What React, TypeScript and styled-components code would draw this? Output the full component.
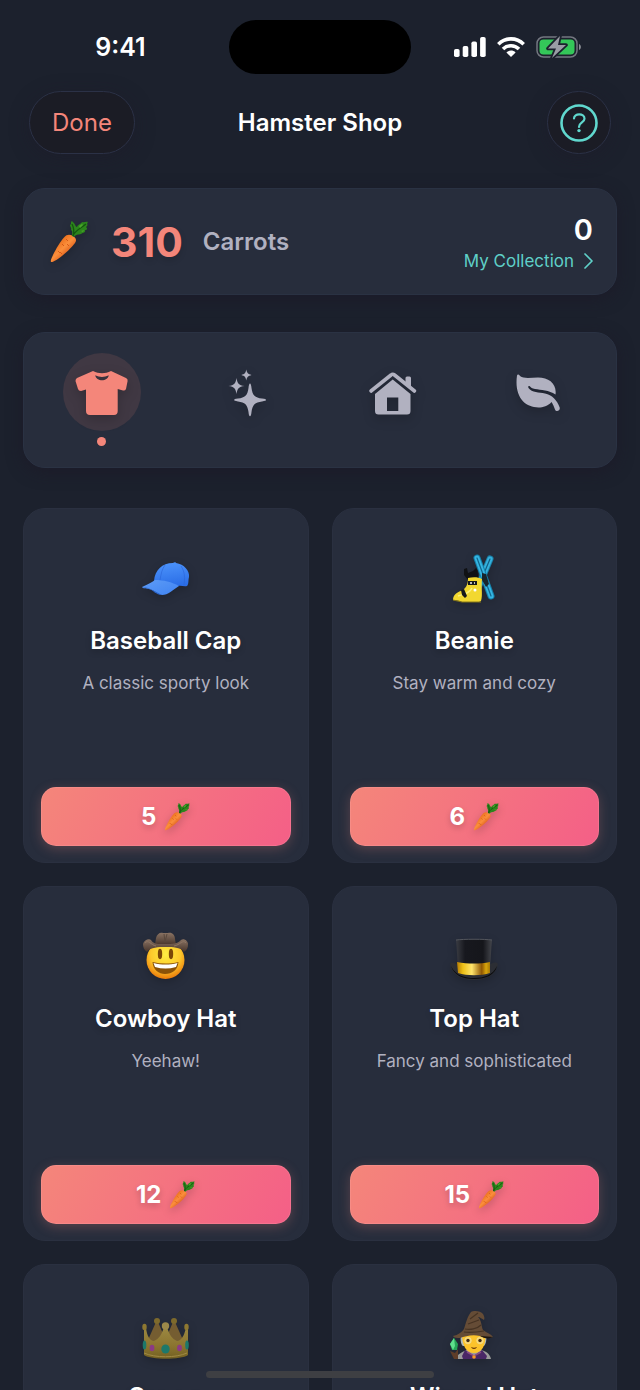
import React from 'react';
import styled, { createGlobalStyle } from 'styled-components';

const CarrotIcon: React.FC<{ width: number; height: number }> = ({
  width,
  height,
}) => (
  <Drawing width={width} height={height} viewBox="0 0 38 42" aria-hidden="true">
    <defs>
      <linearGradient id="carrotBody" x1="0.3" y1="0.3" x2="0.75" y2="0.8">
        <stop offset="0" stopColor="#ee7420" />
        <stop offset="0.4" stopColor="#fb8f3c" />
        <stop offset="1" stopColor="#d24a0e" />
      </linearGradient>
    </defs>
    <path
      d="M1 41C-0.500 39 9 22 14 16.500C17 13 20 13.500 23 15C26 17 27 19 25 22C20 29 5 42 1 41Z"
      fill="url(#carrotBody)"
    />
    <path
      d="M16 18l2 2M12 23l2 2M19 25l-2-2M8 30l2 2M12 33l-2-2"
      stroke="#c94708"
      strokeWidth="0.700"
    />
    <path
      d="M22 15C22 12 23 10 21 9C22 7 20 6 20 4C22 3 20 1 22 0C23 2 24 1 25 4C26 5 26 6 27 6C28 3 31 3 32 1C34 2 36 0 38 1C36 3 39 4 36 6C38 8 37 9 35 9C36 12 33 11 31 13C28 14 26 13 24 16Z"
      fill="#2c851c"
    />
    <path
      d="M23 15C24 10 31 7 36 3M23 15C25 9 23 5 22 3"
      stroke="#14570f"
      strokeWidth="1.300"
      fill="none"
    />
    <path d="M29 5l3-2 1 1-3 3zM31 10l3-1-1 2z" fill="#4ba62a" />
  </Drawing>
);

const CapIcon = () => (
  <Drawing width="48" height="48" viewBox="0 0 48 48" aria-hidden="true">
    <defs>
      <linearGradient id="capDome" x1="0.4" y1="0" x2="0.6" y2="1">
        <stop offset="0" stopColor="#4c93fb" />
        <stop offset="1" stopColor="#2a6de6" />
      </linearGradient>
      <linearGradient id="capBrim" x1="0" y1="0" x2="1" y2="1">
        <stop offset="0" stopColor="#5e9cf6" />
        <stop offset="1" stopColor="#3f83f2" />
      </linearGradient>
    </defs>
    <path
      d="M12 27C13 16 20 9 31 9C32 8 34 8 34 9C42 10 48 17 47 23C46 27 47 30 45 32C42 33 39 31 36 32Z"
      fill="url(#capDome)"
    />
    <path
      d="M23 11C20 15 19 20 18 26M39 12C43 18 43 24 42 31"
      stroke="#2a63d6"
      strokeWidth="0.600"
      fill="none"
    />
    <path
      d="M0 33C5 31 10 28 13 26C21 26 30 28 37 32C31 36 26 41 20 41C15 40 12 36 7 35C4 34 1 35 0 33Z"
      fill="url(#capBrim)"
    />
    <path d="M0 33C7 33 14 38 20 41C14 41 11 36 7 35Z" fill="#2d68cf" />
  </Drawing>
);

const SkiBootIcon = () => (
  <Drawing width="48" height="48" viewBox="0 0 48 48" aria-hidden="true">
    <g strokeLinecap="round">
      <path d="M40 5L27 36" stroke="#1a80a8" strokeWidth="7" />
      <path d="M40 5L27 36" stroke="#35b0dc" strokeWidth="5" />
      <path d="M40 5L27 36" stroke="#135f83" strokeWidth="1.200" />
      <path d="M27 4L41 42" stroke="#1480aa" strokeWidth="7" />
      <path d="M27 4L41 42" stroke="#36b5e2" strokeWidth="5" />
      <path d="M27 4L41 42" stroke="#12678c" strokeWidth="1.200" />
    </g>
    <path d="M32 19l4 1 3 10-3 3-4-7z" fill="#18252c" />
    <path
      d="M14 15L17 14L18 19L23 17L26 14C29 17 27 22 29 25L18 26L14 21Z"
      fill="#101114"
    />
    <path
      d="M18 24C23 23 28 23 32 25C31 34 33 41 31 47L29 48H12L10 47L3 46C3 40 8 38 13 36C17 33 18 29 18 24Z"
      fill="#f2d830"
    />
    <path
      d="M22 34C20 39 14 40 8 42"
      stroke="#fdf07a"
      strokeWidth="1.500"
      fill="none"
    />
    <path d="M18 27H27V31H18ZM11 36L14 35L17 42L15 44L12 41Z" fill="#17191b" />
    <circle cx="25" cy="36" r="1.500" fill="#fff" />
    <path d="M3 46L12 48H31" stroke="#867717" fill="none" />
    <path d="M20 28h2v2h-2zM24 28h1v2h-1z" fill="#b9b9b9" />
  </Drawing>
);

const CowboyIcon = () => (
  <Drawing width="48" height="48" viewBox="0 0 48 48" aria-hidden="true">
    <defs>
      <radialGradient id="cowboyFace" cx="0.5" cy="0.35" r="0.65">
        <stop offset="0" stopColor="#ffed43" />
        <stop offset="0.600" stopColor="#fdc92b" />
        <stop offset="1" stopColor="#ea7a0b" />
      </radialGradient>
      <linearGradient id="cowboyHat" x1="0" y1="0" x2="0" y2="1">
        <stop offset="0" stopColor="#8a7363" />
        <stop offset="1" stopColor="#46342b" />
      </linearGradient>
    </defs>
    <circle cx="23.500" cy="28" r="19" fill="url(#cowboyFace)" />
    <path
      d="M13 13L14 6C15 2 18 0 21 1H26C30 0 33 3 33 7L34 13Z"
      fill="url(#cowboyHat)"
    />
    <path d="M22 2L23 10L25 2" stroke="#59483c" fill="none" />
    <path
      d="M5 20C2 18 1 15 1 12C2 8 7 6 9 8C12 13 18 12 24 12C30 12 36 12 39 8C42 6 46 9 46 12C46 16 45 18 42 20C38 15 31 15 24 15C16 15 9 15 5 20Z"
      fill="url(#cowboyHat)"
    />
    <path
      d="M3 11C6 7 9 13 14 14M44 11C41 7 38 13 32 14"
      stroke="#8d7564"
      fill="none"
    />
    <ellipse cx="18" cy="22" rx="2.200" ry="5.200" fill="#7b4707" />
    <ellipse cx="29" cy="22" rx="2.200" ry="5.200" fill="#7b4707" />
    <path
      d="M10.500 30C19 32 28 32 36.500 30C36 38 30 42 23 42C17 42 11 38 10.500 30Z"
      fill="#8a5208"
    />
    <path d="M11.500 31C20 33 27 33 35.500 31L34 35C27 37 20 37 13 35Z" fill="#fff" />
  </Drawing>
);

const TopHatIcon = () => (
  <Drawing width="48" height="48" viewBox="0 0 48 48" aria-hidden="true">
    <defs>
      <linearGradient id="hatSide">
        <stop offset="0" stopColor="#3a3c43" />
        <stop offset="0.25" stopColor="#17181e" />
        <stop offset="0.75" stopColor="#15161b" />
        <stop offset="1" stopColor="#44464c" />
      </linearGradient>
      <linearGradient id="hatBand">
        <stop offset="0" stopColor="#b47b05" />
        <stop offset="0.18" stopColor="#edc016" />
        <stop offset="0.45" stopColor="#ffe56c" />
        <stop offset="0.75" stopColor="#8f5602" />
        <stop offset="0.88" stopColor="#d8a50c" />
        <stop offset="1" stopColor="#a77906" />
      </linearGradient>
    </defs>
    <path
      d="M0 32C2 29 6 32 9 33H39C42 31 46 29 48 32C46 43 37 48 24 48C11 48 2 43 0 32Z"
      fill="#2c2e34"
    />
    <path
      d="M1 34C6 44 15 46 24 46C34 46 43 43 47 34C45 43 36 47 24 47C12 47 4 43 1 34Z"
      fill="#0a0b0e"
    />
    <path
      d="M6 8C13 7 35 7 42 8C41 17 41 25 40 35H8C7 25 7 17 6 8Z"
      fill="url(#hatSide)"
    />
    <path d="M6 8C13 7 35 7 42 8" stroke="#53565d" fill="none" />
    <path
      d="M7 30C18 32 30 32 40 30V41C31 44 17 44 8 41Z"
      fill="url(#hatBand)"
    />
  </Drawing>
);

const CrownIcon = () => (
  <Drawing width="48" height="48" viewBox="0 0 48 48" aria-hidden="true">
    <defs>
      <linearGradient id="crownGold" x1="0" y1="0" x2="0" y2="1">
        <stop offset="0" stopColor="#9c8942" />
        <stop offset="0.600" stopColor="#8b742f" />
        <stop offset="1" stopColor="#726022" />
      </linearGradient>
    </defs>
    <path
      d="M14 12H16L22 26H25L31 12H33L41 30L35 35H12L6 30Z"
      fill="#755d31"
    />
    <circle cx="15" cy="11" r="3" fill="#7e6a2c" />
    <circle cx="32" cy="11" r="3" fill="#7e6a2c" />
    <path
      d="M2 18L4 18C5 26 8 31 12 31C17 29 20 24 22 17H25C27 24 30 29 35 31C39 31 42 26 44 18H46L46 45C39 50 9 50 2 45Z"
      fill="url(#crownGold)"
    />
    <circle cx="23.500" cy="16" r="3.700" fill="#9c894a" />
    <ellipse cx="2.500" cy="17" rx="2.200" ry="3.200" fill="#8e7831" />
    <ellipse cx="44.500" cy="17" rx="2.200" ry="3.200" fill="#8e7831" />
    <path d="M2 43C13 48 34 48 45 43" stroke="#a08a44" fill="none" />
    <ellipse cx="23.500" cy="39" rx="4.200" ry="4.600" fill="#1d786a" />
    <ellipse cx="2.500" cy="35" rx="1.800" ry="4.500" fill="#1d786a" />
    <ellipse cx="45" cy="35" rx="1.800" ry="4.500" fill="#1d786a" />
    <ellipse cx="10" cy="38" rx="2.400" ry="3.200" fill="#8b3a84" />
    <ellipse cx="37.500" cy="38" rx="2.400" ry="3.200" fill="#8b3a84" />
  </Drawing>
);

const WizardIcon = () => (
  <Drawing width="48" height="48" viewBox="0 0 48 48" aria-hidden="true">
    <path
      d="M6 49C7 44 12 42 17 40H31C36 41 40 44 41 49Z"
      fill="#9b9a9a"
    />
    <path d="M15 40L24 46L32 40L37 46L36 49H13L12 46Z" fill="#4a2766" />
    <path d="M17 42L24 46L31 42" stroke="#8a4a80" strokeWidth="1.500" fill="none" />
    <path d="M11 24C10 30 11 35 13 36H34C36 34 37 29 36 24Z" fill="#aeb8ba" />
    <path
      d="M12 24H35.500C36 35 32 43 24 43C16 43 12 35 12 24Z"
      fill="#fcc32b"
    />
    <path
      d="M3 26C8 25 12 22 14 19C16 13 17 7 21 2C24 0 31 1 33 4C34 6 35 8 34 10C32 9 30 7 28 7C32 11 31 16 33 20C37 23 41 24 43 27C39 29 34 28 30 26C23 24 15 26 10 28C7 28 4 28 3 26Z"
      fill="#654c36"
    />
    <path
      d="M20 9L28 3M18 14L29 10M15 19C20 20 27 19 31 15M14 22C21 23 28 22 34 21"
      stroke="#463323"
      strokeWidth="1.200"
      fill="none"
    />
    <path d="M30 26C35 26 40 27 43 27C39 29 35 29 30 26Z" fill="#1c1612" />
    <circle cx="18" cy="30.500" r="3.300" stroke="#e9dca0" strokeWidth="0.700" fill="#ffd96a" />
    <circle cx="30" cy="30.500" r="3.300" stroke="#e9dca0" strokeWidth="0.700" fill="#ffd96a" />
    <circle cx="18" cy="30.500" r="1.700" fill="#3d2b1b" />
    <circle cx="30" cy="30.500" r="1.700" fill="#3d2b1b" />
    <path d="M21 37C23 38 25 38 27 37C26 39.500 22 39.500 21 37Z" fill="#613007" />
    <circle cx="24" cy="47" r="1.800" fill="#f69824" />
    <path d="M4 28L8 34L7 40H2L0 34Z" fill="#25a556" />
    <path d="M4 28L5 36L3 40L0 34Z" fill="#5fe08c" />
    <path d="M0 41L5 43L8 39L8 49H4Z" fill="#5f3d29" />
  </Drawing>
);

const ShirtIcon = () => (
  <TabDrawing viewBox="0 0 78 78" aria-hidden="true">
    <path
      fillRule="evenodd"
      d="M30 18C36 21 42 21 48 18L63 25Q65 26 64.600 28L63 36Q62 38 60 37.500L54.700 36V58Q54.700 62 51 62H27Q23 62 23 58V36.500L18 38Q15.500 38 15 36L12.500 28Q12.500 26 14 25ZM32.300 22.300C33 29 45 29 45.700 22.300C41 24.500 37 24.500 32.300 22.300Z"
    />
  </TabDrawing>
);

const SparklesIcon = () => (
  <TabDrawing viewBox="0 0 78 78" aria-hidden="true">
    <path d="M42 30.500C42.700 30.500 43.200 32 43.500 35C44.500 42.500 47 44.700 54 45.600C57 46 58 46.200 58 47C58 47.800 57 48 54 48.400C47 49.300 44.500 51.500 43.500 59C43.200 62 42.700 63.300 42 63.300C41.300 63.300 40.800 62 40.500 59C39.500 51.500 37 49.300 30 48.400C27 48 26.200 47.800 26.200 47C26.200 46.200 27 46 30 45.600C37 44.700 39.500 42.500 40.500 35C40.800 32 41.300 30.500 42 30.500Z" />
    <path d="M28.500 25C29.500 30.500 30.500 32.200 36.500 33C30.500 33.800 29.500 35.500 28.500 41C27.500 35.500 26.500 33.800 20.500 33C26.500 32.200 27.500 30.500 28.500 25Z" />
    <path d="M38.300 16.500C39 20 40 21 43.500 22C40 23 39 24 38.300 27.500C37.500 24 37 23 33.300 22C37 21 37.500 20 38.300 16.500Z" />
  </TabDrawing>
);

const HouseIcon = () => (
  <TabDrawing viewBox="0 0 78 78" aria-hidden="true">
    <path
      d="M17 38L37 22Q38.700 20.500 40.500 22L60.500 38"
      fill="none"
      stroke="currentColor"
      strokeWidth="3.600"
      strokeLinecap="round"
    />
    <path d="M51.500 31V25Q51.500 23.500 53 23.500H55.500Q57 23.500 57 25V35.500Z" />
    <path
      fillRule="evenodd"
      d="M38.700 26.500L56.500 41V58Q56.500 61.500 53 61.500H24.500Q21 61.500 21 58V41ZM33 44.500V58H44.300V44.500Z"
    />
  </TabDrawing>
);

const LeafIcon = () => (
  <TabDrawing viewBox="0 0 78 78" aria-hidden="true">
    <path d="M18 22.500C18.500 21 20 21.500 21 23C25 26 32 24.500 39 24.500C50 24.500 58 31 56.500 41.500C50 37 42 37 36 36C33 35.500 32 34.500 30.500 33C29 32.500 29 34 29.500 35C33 40 40 39 46 40.500C53 42 58 47 60.700 54.500C61.500 58 57 59.500 56 56.500C55 53.500 54 51.500 52.500 49C49 53 44 54.500 39.500 54.500C26 54.500 15 44 18 22.500Z" />
  </TabDrawing>
);

const BatteryIcon = () => (
  <svg width="45" height="22" viewBox="0 0 45 22" aria-hidden="true">
    <rect
      x="1"
      y="1"
      width="40"
      height="20"
      rx="6.500"
      fill="none"
      stroke="#737780"
      strokeWidth="1.500"
    />
    <rect x="3.500" y="3.500" width="35" height="15" rx="4" fill="#34c759" />
    <path d="M43 8C45.500 9 45.500 13 43 14Z" fill="#8a8d95" />
    <path
      d="M24 0L12 12.500H20L16 22L30 9H22Z"
      fill="#9a9da5"
      stroke="#1c212d"
      strokeWidth="3.600"
      strokeLinejoin="round"
      paintOrder="stroke"
    />
  </svg>
);

const tabs = [
  { label: 'Clothing', Icon: ShirtIcon },
  { label: 'Effects', Icon: SparklesIcon },
  { label: 'Home', Icon: HouseIcon },
  { label: 'Nature', Icon: LeafIcon },
];

interface ShopItem {
  name: string;
  Icon: React.FC;
  description?: string;
  price?: number;
}

const items: ShopItem[] = [
  {
    name: 'Baseball Cap',
    Icon: CapIcon,
    description: 'A classic sporty look',
    price: 5,
  },
  {
    name: 'Beanie',
    Icon: SkiBootIcon,
    description: 'Stay warm and cozy',
    price: 6,
  },
  { name: 'Cowboy Hat', Icon: CowboyIcon, description: 'Yeehaw!', price: 12 },
  {
    name: 'Top Hat',
    Icon: TopHatIcon,
    description: 'Fancy and sophisticated',
    price: 15,
  },
  { name: 'Crown', Icon: CrownIcon },
  { name: 'Wizard Hat', Icon: WizardIcon },
];

const App: React.FC = () => {
  const [activeTab, setActiveTab] = React.useState('Clothing');

  return (
    <Screen>
      <GlobalStyle />
      <StatusBar>
        <Clock>9:41</Clock>
        <Island />
        <StatusIcons>
          <svg width="32" height="20" viewBox="0 0 32 20" fill="#fff" aria-hidden="true">
            <rect y="12" width="5.600" height="8" rx="1.800" />
            <rect x="8.700" y="9" width="5.600" height="11" rx="1.800" />
            <rect x="17.400" y="4.500" width="5.600" height="15.500" rx="1.800" />
            <rect x="26.100" width="5.600" height="20" rx="1.800" />
          </svg>
          <svg width="28" height="20" viewBox="0 0 28 20" aria-hidden="true">
            <g fill="none" stroke="#fff" strokeWidth="3.600">
              <path d="M1.300 7.200C8.500 0.100 19.500 0.100 26.700 7.200" />
              <path d="M6 12C10.500 7.600 17.500 7.600 22 12" />
            </g>
            <path d="M9.400 15.400C12 13 16 13 18.600 15.400L14 20Z" fill="#fff" />
          </svg>
          <BatteryIcon />
        </StatusIcons>
      </StatusBar>

      <Header>
        <DoneButton type="button">Done</DoneButton>
        <Title>Hamster Shop</Title>
        <HelpButton type="button" aria-label="Help">
          <svg width="38" height="38" viewBox="0 0 38 38" aria-hidden="true">
            <circle
              cx="19"
              cy="19"
              r="17.500"
              fill="none"
              stroke="currentColor"
              strokeWidth="2.600"
            />
            <path
              d="M14 14.500C14 9 24.500 9 24.500 14.700C24.500 18.500 19 18.500 19 23"
              fill="none"
              stroke="currentColor"
              strokeWidth="2.200"
              strokeLinecap="round"
            />
            <circle cx="19" cy="26.600" r="1.700" fill="currentColor" />
          </svg>
        </HelpButton>
      </Header>

      <Content>
        <Balance>
          <CarrotIcon width={38} height={42} />
          <Amount>310</Amount>
          <Unit>Carrots</Unit>
          <Collection>
            <CollectionCount>0</CollectionCount>
            <CollectionLink href="#collection">
              My Collection
              <svg width="9" height="16" viewBox="0 0 9 16" aria-hidden="true">
                <path
                  d="M1 1L8 8L1 15"
                  fill="none"
                  stroke="currentColor"
                  strokeWidth="1.700"
                  strokeLinecap="round"
                  strokeLinejoin="round"
                />
              </svg>
            </CollectionLink>
          </Collection>
        </Balance>

        <Tabs>
          {tabs.map(({ label, Icon }) => (
            <Tab
              key={label}
              type="button"
              aria-label={label}
              aria-pressed={label === activeTab}
              $active={label === activeTab}
              onClick={() => setActiveTab(label)}
            >
              <TabCircle $active={label === activeTab}>
                <Icon />
              </TabCircle>
              <TabDot $active={label === activeTab} />
            </Tab>
          ))}
        </Tabs>

        <Grid>
          {items.map(({ name, Icon, description, price }) => (
            <ItemCard key={name}>
              <Icon />
              <ItemName>{name}</ItemName>
              {description && <Description>{description}</Description>}
              {price && (
                <PriceButton type="button">
                  {price}
                  <CarrotIcon width={26} height={28} />
                </PriceButton>
              )}
            </ItemCard>
          ))}
        </Grid>
      </Content>
      <HomeIndicator />
    </Screen>
  );
};

const GlobalStyle = createGlobalStyle`
  * {
    box-sizing: border-box;
  }

  body {
    margin: 0;
    background: #1c212d;
  }

  button {
    font: inherit;
    padding: 0;
    border: 0;
    background: none;
    cursor: pointer;
  }
`;

const Screen = styled.div`
  position: relative;
  height: 100vh;
  overflow: hidden;
  background: #1c212d;
  color: #fff;
  font-family: Inter, 'Liberation Sans', sans-serif;
`;

const Drawing = styled.svg`
  display: block;
  flex: none;
  overflow: visible;
  filter: drop-shadow(0 3px 4px rgba(0, 0, 0, 0.2));
`;

const StatusBar = styled.div`
  display: grid;
  grid-template-columns: 1fr 182px 1fr;
  align-items: center;
  padding: 20px 0 17px;
`;

const Clock = styled.time`
  padding-left: 12px;
  text-align: center;
  font-size: 25px;
  font-weight: 600;
`;

const Island = styled.div`
  height: 54px;
  border-radius: 27px;
  background: #000;
`;

const StatusIcons = styled.div`
  display: flex;
  align-items: center;
  justify-content: center;
  gap: 11px;
  padding-right: 16px;
`;

const Header = styled.header`
  display: grid;
  grid-template-columns: 1fr auto 1fr;
  align-items: center;
  padding: 0 29px;
`;

const DoneButton = styled.button`
  && {
    width: 106px;
    height: 63px;
    border: 1px solid #2b3146;
    border-radius: 32px;
    background: #1b1c25;
    box-shadow: 0 4px 20px rgba(30, 26, 40, 0.4);
    color: #f4867a;
    font-size: 24px;
  }
`;

const HelpButton = styled(DoneButton)`
  && {
    display: flex;
    align-items: center;
    justify-content: center;
    justify-self: end;
    width: 64px;
    color: #60d8ce;
  }
`;

const Title = styled.h1`
  margin: 0;
  font-size: 24px;
  font-weight: 600;
`;

const Content = styled.main`
  padding: 34px 23px 0;
`;

const Panel = styled.section`
  border: 1px solid #2a3243;
  border-radius: 22px;
  background: #272d3c;
  box-shadow: 0 4px 16px rgba(29, 24, 38, 0.6);
`;

const Balance = styled(Panel)`
  display: flex;
  align-items: center;
  height: 107px;
  padding: 0 23px 0 26px;
`;

const Amount = styled.span`
  margin-left: 23px;
  color: #f4867a;
  font-size: 41px;
  font-weight: 700;
  text-shadow: 0 3px 6px rgba(0, 0, 0, 0.15);
`;

const Unit = styled.span`
  margin-left: 20px;
  color: #b1b1c0;
  font-size: 24px;
  font-weight: 600;
`;

const Collection = styled.div`
  display: flex;
  flex-direction: column;
  align-items: flex-end;
  gap: 4px;
  margin-left: auto;
  padding-top: 2px;
`;

const CollectionCount = styled.span`
  font-size: 29px;
  font-weight: 600;
  line-height: 32px;
`;

const CollectionLink = styled.a`
  display: flex;
  align-items: center;
  gap: 10px;
  color: #5fd0c8;
  font-size: 17px;
  line-height: 22px;
  text-decoration: none;
`;

const Tabs = styled(Panel)`
  display: grid;
  grid-template-columns: repeat(4, 1fr);
  margin-top: 37px;
  padding: 20px 5px 21px;
`;

const Tab = styled.button<{ $active: boolean }>`
  && {
    display: flex;
    flex-direction: column;
    align-items: center;
    gap: 6px;
    color: ${({ $active }) => ($active ? '#f4867a' : '#b1b1c0')};
  }
`;

const TabCircle = styled.span<{ $active: boolean }>`
  width: 78px;
  height: 78px;
  border-radius: 50%;
  background: ${({ $active }) => ($active ? '#403843' : 'transparent')};
`;

const TabDrawing = styled.svg`
  display: block;
  width: 78px;
  height: 78px;
  fill: currentColor;
  filter: drop-shadow(0 4px 6px rgba(0, 0, 0, 0.2));
`;

const TabDot = styled.span<{ $active: boolean }>`
  width: 9px;
  height: 9px;
  border-radius: 50%;
  background: ${({ $active }) => ($active ? '#f4867a' : 'transparent')};
`;

const Grid = styled.div`
  display: grid;
  grid-template-columns: repeat(2, 1fr);
  gap: 23px;
  margin-top: 40px;
`;

const ItemCard = styled.article`
  display: flex;
  flex-direction: column;
  align-items: center;
  height: 355px;
  padding: 45px 17px 16px;
  border: 1px solid #2a3040;
  border-radius: 22px;
  background: #272d3c;
`;

const ItemName = styled.h2`
  margin: 24px 0 0;
  font-size: 24px;
  font-weight: 600;
  line-height: 30px;
  text-shadow: 0 3px 6px rgba(0, 0, 0, 0.2);
`;

const Description = styled.p`
  margin: 15px 0 0;
  color: #b1b1c0;
  font-size: 17px;
  line-height: 24px;
`;

const PriceButton = styled.button`
  && {
    display: flex;
    align-items: center;
    justify-content: center;
    gap: 8px;
    width: 100%;
    height: 59px;
    margin-top: auto;
    border: 1px solid rgba(255, 180, 180, 0.2);
    border-radius: 15px;
    background: linear-gradient(120deg, #f4867a, #f45f87) border-box;
    box-shadow: 0 3px 12px rgba(244, 134, 122, 0.25);
    color: #fff;
    font-size: 24px;
    font-weight: 700;
    text-shadow: 0 3px 6px rgba(0, 0, 0, 0.2);
  }
`;

const HomeIndicator = styled.div`
  position: absolute;
  bottom: 12px;
  left: 50%;
  width: 228px;
  height: 7px;
  margin-left: -114px;
  border-radius: 4px;
  background: #3e3f43;
`;

export default App;
